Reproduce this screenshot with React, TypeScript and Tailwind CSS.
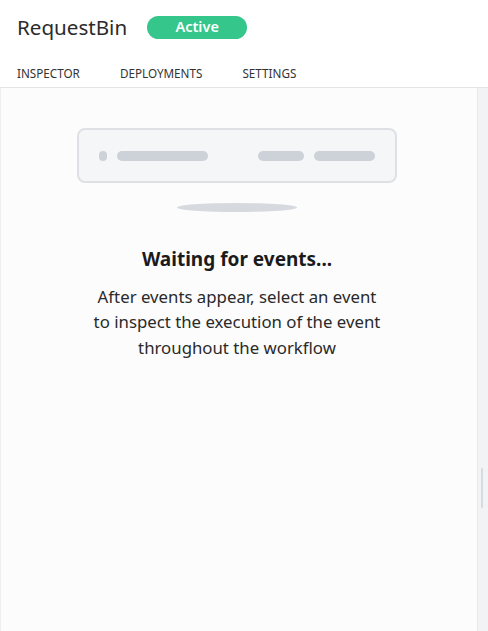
import React from 'react';

const font = {fontFamily: '"Segoe UI", "Noto Sans", "Open Sans", sans-serif'};

function Placeholder() {
    return (
        <div className="flex flex-col items-center">
            <div className="w-[320px] h-[55px] rounded-lg border-2 border-[#dde1e6] bg-[#f5f6f8] flex items-center px-5">
                <div className="w-2 h-[10px] rounded-full bg-[#cdd2d9]"/>
                <div className="ml-[10px] w-[91px] h-[10px] rounded-full bg-[#cdd2d9]"/>
                <div className="ml-auto w-[46px] h-[10px] rounded-full bg-[#cdd2d9]"/>
                <div className="ml-[10px] w-[61px] h-[10px] rounded-full bg-[#cdd2d9]"/>
            </div>
            <div className="mt-5 w-[120px] h-[9px] rounded-[50%] bg-[#d6dadf]"/>
        </div>
    );
}

export default function App() {
    return (
        <div className="w-[488px] h-[631px] flex flex-col bg-white overflow-hidden" style={font}>
            <header className="h-[88px] border-b border-[#e3e5e8] shadow-[0_1px_2px_rgba(0,0,0,0.04)] shrink-0">
                <div className="flex items-center h-[54px] pl-[17px] gap-5">
                    <span className="text-[20.6px] text-[#2b2b2b]">RequestBin</span>
                    <span className="w-[100px] h-[23px] rounded-full bg-[#34c68a] text-white text-[14.5px] font-semibold flex items-center justify-center">Active</span>
                </div>
                <nav className="flex gap-10 pl-[17px] text-[11.7px] text-[#333] mt-[11px]">
                    <span>INSPECTOR</span>
                    <span>DEPLOYMENTS</span>
                    <span>SETTINGS</span>
                </nav>
            </header>
            <div className="flex flex-1 min-h-0">
                <main className="flex-1 bg-[#fcfcfd] border-l border-[#eeeff1] flex flex-col items-center pt-[40px] pr-1">
                    <Placeholder/>
                    <h2 className="mt-[33px] text-[19px] font-bold text-[#1b1b1b]">Waiting for events...</h2>
                    <p className="mt-[10px] w-[290px] text-center text-[16.8px] leading-[25.5px] text-[#2a2a2a]">
                        After events appear, select an event to inspect the execution of the event throughout the workflow
                    </p>
                </main>
                <div className="w-[11px] bg-[#f2f3f5] border-l border-[#e8e9eb] relative">
                    <div className="absolute left-[3px] top-[380px] w-[2px] h-[40px] rounded bg-[#d3dbe3]"/>
                </div>
            </div>
        </div>
    );
}
